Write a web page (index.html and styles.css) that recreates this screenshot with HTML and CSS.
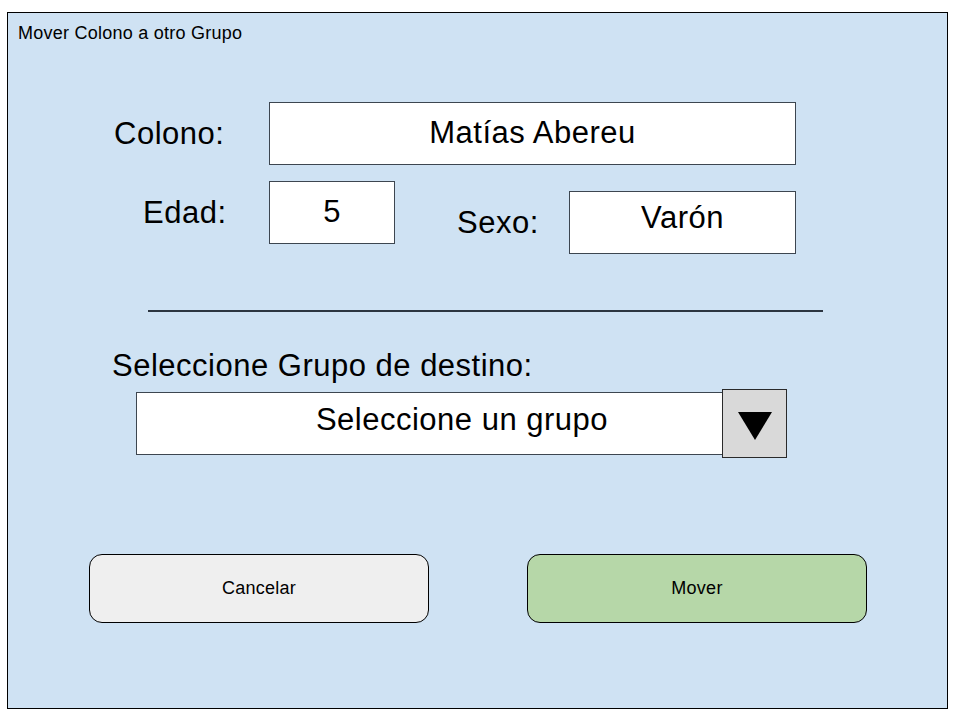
FILE: index.html
```html
<!DOCTYPE html>
<html lang="es">
<head>
<meta charset="utf-8">
<title>Mover Colono a otro Grupo</title>
<link rel="stylesheet" href="styles.css">
</head>
<body>
<div class="frame">
  <div class="title">Mover Colono a otro Grupo</div>

  <div class="row-colono">
    <span class="label label-colono">Colono:</span>
    <div class="field field-name">Matías Abereu</div>
  </div>

  <div class="row-2">
    <div class="pair">
      <span class="label label-edad">Edad:</span>
      <div class="field field-age">5</div>
    </div>
    <div class="pair pair-sexo">
      <span class="label label-sexo">Sexo:</span>
      <div class="field field-sex">Varón</div>
    </div>
  </div>

  <div class="divider"></div>

  <div class="label label-group">Seleccione Grupo de destino:</div>
  <div class="combo">
    <div class="combo-box">Seleccione un grupo</div>
    <div class="combo-btn">
      <svg width="34" height="28" viewBox="0 0 34 28"><polygon points="0,0 34,0 17,28" fill="#000"/></svg>
    </div>
  </div>

  <div class="actions">
    <button class="btn btn-cancel">Cancelar</button>
    <button class="btn btn-move">Mover</button>
  </div>
</div>
</body>
</html>
```

FILE: styles.css
```css
body {
  margin: 0;
  background: #ffffff;
  font-family: "Liberation Sans", Arial, sans-serif;
  color: #000;
}

.frame {
  box-sizing: border-box;
  width: 941px;
  height: 697px;
  margin: 12px 0 0 7px;
  border: 1px solid #000;
  background: #cfe2f3;
  padding-top: 10px;
  display: flex;
  flex-direction: column;
  align-items: flex-start;
}

.title {
  margin-left: 10px;
  font-size: 18px;
  line-height: 20px;
  letter-spacing: 0.25px;
}

.label {
  font-size: 31px;
  line-height: 36px;
  letter-spacing: 0.5px;
  color: #000;
}

.field {
  box-sizing: border-box;
  height: 63px;
  background: #fff;
  border: 1px solid #3d4650;
  display: flex;
  align-items: center;
  justify-content: center;
  font-size: 31px;
  line-height: 36px;
  letter-spacing: 0.5px;
}

.row-colono {
  display: flex;
  align-items: center;
  margin-top: 59px;
  padding-left: 106px;
}

.label-colono { width: 155px; }
.field-name { width: 527px; padding-bottom: 2px; }

.row-2 {
  display: flex;
  align-items: flex-start;
  margin-top: 16px;
  padding-left: 135px;
}

.pair {
  display: flex;
  align-items: center;
}

.label-edad { width: 126px; }
.field-age { width: 126px; padding-bottom: 1px; }

.pair-sexo {
  margin-top: 10px;
  margin-left: 62px;
}

.label-sexo { width: 112px; }
.field-sex { width: 227px; padding-bottom: 9px; }

.divider {
  margin: 56px 0 0 140px;
  width: 675px;
  height: 2px;
  background: #2c3540;
}

.label-group {
  margin: 36px 0 0 104px;
}

.combo {
  display: flex;
  align-items: center;
  margin: 5px 0 0 128px;
}

.combo-box {
  box-sizing: border-box;
  width: 587px;
  height: 63px;
  background: #fff;
  border: 1px solid #3d4650;
  display: flex;
  align-items: center;
  justify-content: center;
  padding-left: 65px;
  padding-bottom: 8px;
  font-size: 31px;
  line-height: 36px;
  letter-spacing: 0.5px;
}

.combo-btn {
  box-sizing: border-box;
  width: 65px;
  height: 69px;
  margin-left: -1px;
  background: #d9d9d9;
  border: 1px solid #2a2a2a;
  display: flex;
  align-items: center;
  justify-content: center;
  padding-top: 5px;
}

.combo-btn svg { display: block; }

.actions {
  display: flex;
  gap: 98px;
  margin: 96px 0 0 81px;
}

.btn {
  box-sizing: border-box;
  width: 340px;
  height: 69px;
  padding: 0;
  border: 1px solid #000;
  border-radius: 13px;
  font-family: "Liberation Sans", Arial, sans-serif;
  font-size: 18px;
  letter-spacing: 0.25px;
  color: #000;
}

.btn-cancel { background: #efefef; }
.btn-move { background: #b6d7a8; }
```
